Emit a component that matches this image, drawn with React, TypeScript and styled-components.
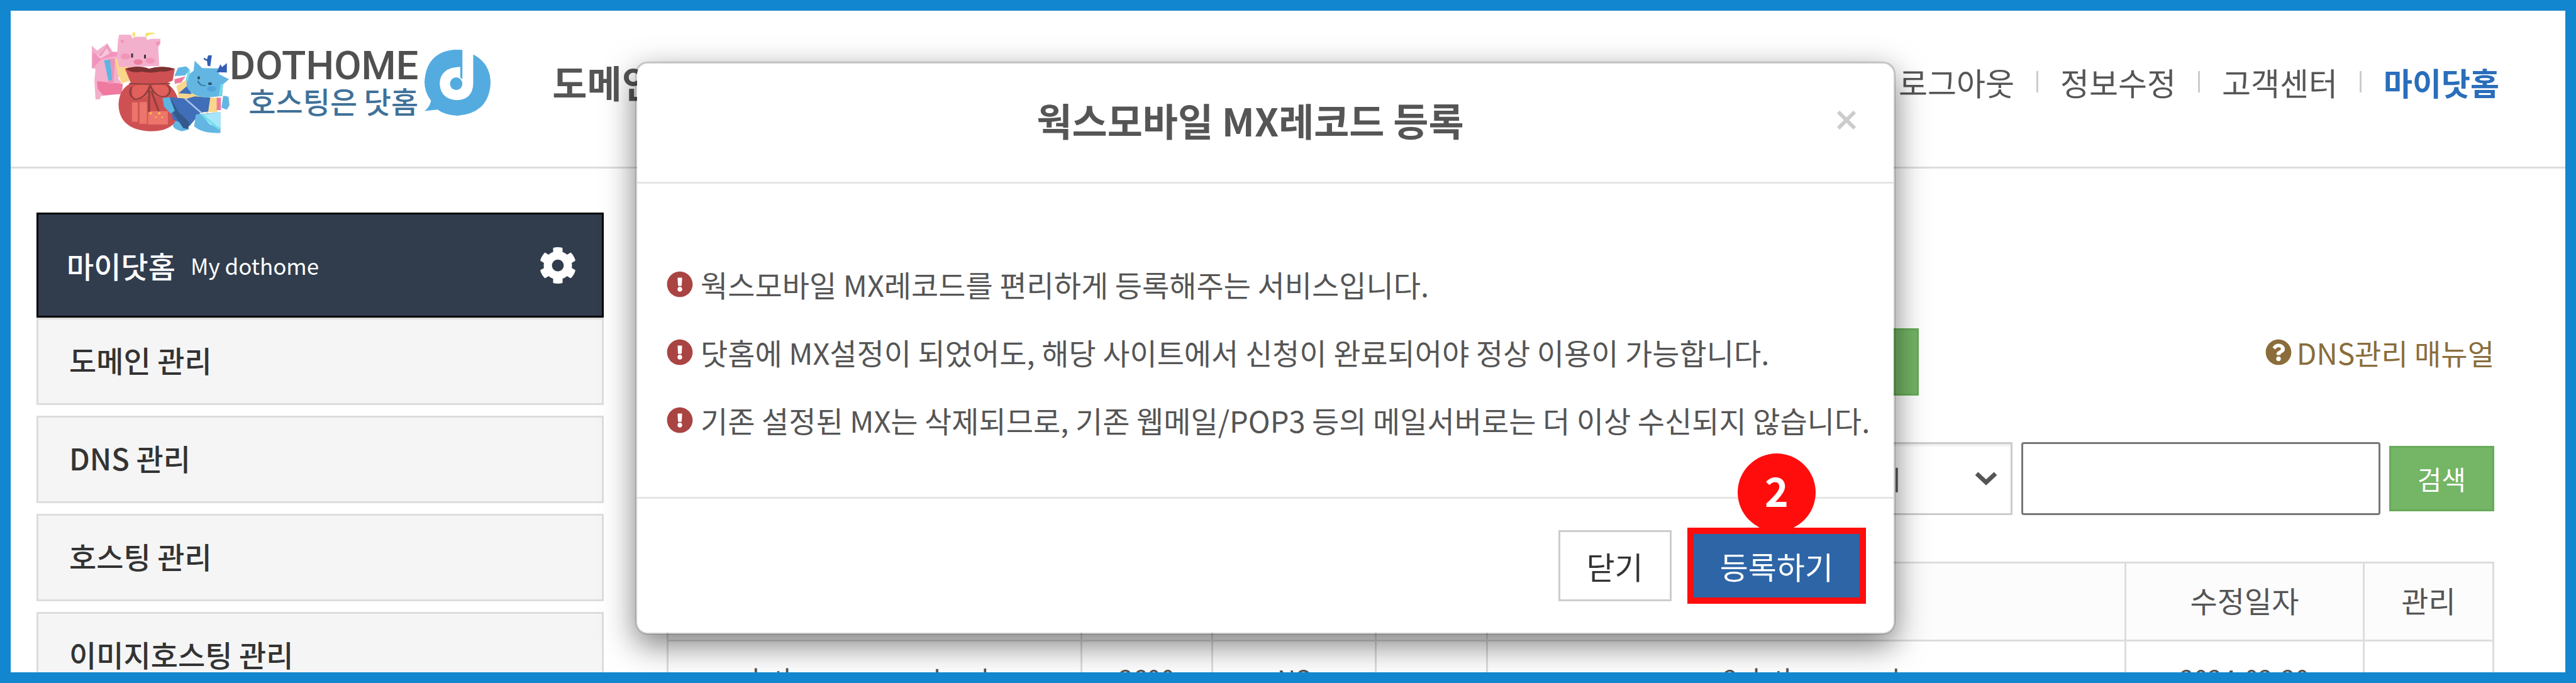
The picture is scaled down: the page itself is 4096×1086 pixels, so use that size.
import React from "react";
import styled, { createGlobalStyle } from "styled-components";
import { FaCog, FaExclamationCircle, FaQuestionCircle } from "react-icons/fa";

const GlobalStyle = createGlobalStyle`
  *, *::before, *::after { box-sizing: border-box; }
  body {
    margin: 0;
    background: #fff;
    color: #555;
    font-family: "Noto Sans CJK KR", "Noto Sans", sans-serif;
    font-size: 47px;
    line-height: 60px;
  }
  button, input, select { font: inherit; color: inherit; margin: 0; }
  a { color: inherit; text-decoration: none; }
  ul { list-style: none; margin: 0; padding: 0; }
`;

const Frame = styled.div`
  position: relative;
  height: 100vh;
  overflow: hidden;
  border: 17px solid #1287d0;
  background: #fff;
`;

const Header = styled.header`
  display: flex;
  align-items: center;
  padding: 34px 105px 53px 128px;
  border-bottom: 3px solid #ddd;
`;

const Brand = styled.a`
  display: flex;
  align-items: center;
`;

const BrandText = styled.span`
  display: flex;
  flex-direction: column;
  align-items: flex-end;
  margin-right: 10px;
`;

const BrandName = styled.span`
  font-family: Roboto, "Liberation Sans", sans-serif;
  font-size: 63px;
  font-weight: 500;
  line-height: 56px;
  color: #505050;
`;

const BrandSlogan = styled.span`
  font-size: 47px;
  font-weight: 500;
  line-height: 54px;
  color: #3f7199;
`;

const MainNav = styled.nav`
  margin-left: 98px;
  padding-bottom: 4px;
  font-size: 60px;
  font-weight: 700;
  line-height: 80px;
  color: #555;
`;

const UserNav = styled.nav`
  display: flex;
  align-items: center;
  gap: 35px;
  margin-left: auto;
  padding-bottom: 4px;
  font-size: 50px;
`;

const UserLink = styled.a<{ $active?: boolean }>`
  color: ${(p) => (p.$active ? "#2a6ebb" : "#555")};
  font-weight: ${(p) => (p.$active ? 700 : 400)};
`;

const Divider = styled.span`
  width: 3px;
  height: 34px;
  background: #ccc;
`;

const Main = styled.main`
  display: grid;
  grid-template-columns: 902px minmax(0, 1fr);
  column-gap: 100px;
  align-items: start;
  padding: 70px 113px 0 41px;
`;

const SideHead = styled.div`
  display: flex;
  align-items: center;
  height: 167px;
  padding: 0 40px 0 45px;
  border: 3px solid #000;
  background: #313d4d;
  color: #fff;
  font-weight: 500;
`;

const SideHeadSub = styled.small`
  margin-left: 24px;
  font-size: 35px;
  font-weight: 400;
`;

const GearButton = styled.button`
  display: flex;
  margin-left: auto;
  padding: 0;
  border: 0;
  background: none;
  color: #fff;
  font-size: 60px;
`;

const SideMenu = styled.ul`
  display: flex;
  flex-direction: column;
  gap: 17px;
`;

const SideItem = styled.a`
  display: flex;
  align-items: center;
  height: 139px;
  padding: 0 49px 6px;
  border: 3px solid #ddd;
  background: #f5f5f5;
  color: #333;
  font-weight: 500;
`;

const Content = styled.section`
  display: flex;
  flex-direction: column;
  gap: 74px;
  padding-top: 184px;
`;

const Toolbar = styled.div`
  display: flex;
  align-items: flex-start;
  justify-content: space-between;
`;

const ToolbarActions = styled.div`
  display: flex;
  justify-content: flex-end;
  width: 1991px;
`;

const GreenButton = styled.button<{ $height: number }>`
  height: ${(p) => p.$height}px;
  padding: 0 42px;
  border: 3px solid #67ab58;
  background: #74b566;
  color: #fff;
  font-size: 42px;
`;

const ManualLink = styled.a`
  display: flex;
  align-items: center;
  gap: 8px;
  font-size: 46px;
  line-height: 76px;
  color: #8a6d3b;

  svg { font-size: 42px; }
`;

const SearchForm = styled.form`
  display: flex;
  align-items: center;
  justify-content: flex-end;
  gap: 14px;
  height: 116px;
`;

const SelectBox = styled.label`
  position: relative;
  display: block;
  align-self: stretch;
  width: 320px;

  svg {
    position: absolute;
    right: 24px;
    top: 46px;
    pointer-events: none;
  }
`;

const Select = styled.select`
  appearance: none;
  width: 100%;
  height: 100%;
  padding: 0 62px;
  border: 3px solid #ccc;
  border-radius: 0;
  background: #fff;
  box-shadow: inset 0 3px 3px rgba(0, 0, 0, 0.075);
  font-size: 42px;
`;

const SearchInput = styled.input`
  align-self: stretch;
  width: 571px;
  padding: 0 20px;
  border: 3px solid #767676;
  border-radius: 4px;
  background: #fff;
`;

const Table = styled.table`
  width: 100%;
  table-layout: fixed;
  border-collapse: collapse;

  th, td {
    height: 124px;
    padding: 0 0 6px;
    border: 3px solid #ddd;
    text-align: center;
  }
  th {
    background: #fcfcfc;
    font-weight: 400;
  }
  td { font-size: 40px; }
`;

const Overlay = styled.div`
  position: absolute;
  inset: 0;
  display: flex;
  align-items: flex-start;
  justify-content: center;
  padding: 81px 72px 0 0;
`;

const Modal = styled.div`
  width: 2004px;
  border: 3px solid rgba(0, 0, 0, 0.2);
  border-radius: 20px;
  background: #fff;
  background-clip: padding-box;
  box-shadow: 0 17px 50px rgba(0, 0, 0, 0.5);
`;

const ModalHeader = styled.div`
  display: flex;
  align-items: center;
  height: 191px;
  padding: 0 60px 8px;
  border-bottom: 3px solid #e5e5e5;
`;

const ModalTitle = styled.h2`
  flex: 1;
  margin: 0;
  font-size: 61px;
  font-weight: 700;
  line-height: 80px;
  text-align: center;
`;

const CloseButton = styled.button`
  display: flex;
  align-items: center;
  justify-content: flex-end;
  width: 48px;
  padding: 0;
  border: 0;
  background: none;
  color: #ccc;
`;

const NoticeList = styled.ul`
  padding: 106px 47px 68px;
`;

const Notice = styled.li`
  display: flex;
  align-items: center;
  gap: 12px;
  height: 108px;
  white-space: nowrap;

  svg {
    flex: none;
    font-size: 42px;
    color: #a94442;
  }
`;

const ModalFooter = styled.div`
  display: flex;
  align-items: center;
  justify-content: flex-end;
  gap: 25px;
  padding: 46px 44px;
  border-top: 3px solid #e5e5e5;
  font-size: 49px;
`;

const CancelButton = styled.button`
  height: 113px;
  padding: 0 42px;
  border: 3px solid #ccc;
  background: #fff;
  color: #333;
`;

const SubmitWrap = styled.div`
  position: relative;
`;

const SubmitButton = styled.button`
  height: 121px;
  padding: 0 42px;
  border: 10px solid #ff0d0d;
  background: #2d65a6;
  color: #fff;
`;

const StepBadge = styled.span`
  position: absolute;
  left: 50%;
  bottom: 115px;
  display: flex;
  align-items: center;
  justify-content: center;
  width: 124px;
  height: 124px;
  margin-left: -62px;
  padding-bottom: 10px;
  border-radius: 50%;
  background: #ff0d0d;
  color: #fff;
  font-size: 64px;
  font-weight: 700;
`;

const Mascots = () => (
  <svg width="220" height="161" viewBox="38 70 516 602" preserveAspectRatio="none" aria-hidden="true">
    <path d="M192 72h10v24h-10zM240 78q8-8 34-4v8q-20-2-26 14h-8z" fill="#f8e472" />
    <path d="M40 150l20 30 38-44 20 50 22 2v160l10 20-10 70-66 12-4 20H54l-4-110 4-70-14-6z" fill="#f3b0cc" />
    <path d="M44 190l24 20 30-64 14 46 24-2 2 22-30 8-30 10-34 55H42z" fill="#f093bd" />
    <path d="M54 198l20 16 22-50 12 32-36 32z" fill="#f7c6da" />
    <path d="M60 362q50 10 96 16l-4 60-70 8-20-40z" fill="#f0799f" />
    <path d="M104 228l24 0-8 150h-18z" fill="#ea94b6" />
    <path d="M86 238l22-4 8 120-14 4z" fill="#5cb5e2" />
    <path d="M126 222l58 50-4 90-28 12-16-60z" fill="#fad68a" />
    <path d="M142 86h44l6 22 8-10h42l6 20 12-8h36v30l-8 20 4 112-150 6-8-70 4-90z" fill="#f3b0cc" />
    <path d="M146 120q10-14 16 6l-8 12zM278 132q12-14 18 0l-12 22z" fill="#f093bd" />
    <circle cx="166" cy="215" r="18" fill="#f296b8" />
    <circle cx="258" cy="240" r="18" fill="#f296b8" />
    <ellipse cx="213" cy="248" rx="17" ry="16" fill="#ee7fa0" />
    <path d="M187 197h7v24h-7zM235 205h7v22h-7z" fill="#42333a" />
    <path d="M362 282l30-8 14 20-18 34-40 4z" fill="#63b6e2" />
    <path d="M348 350l42-16-16 36-24 8z" fill="#f0799f" />
    <path d="M530 448l20 6 4 50-10 28-20-12z" fill="#63b6e2" />
    <path d="M342 596l50-6 10 60-26 10q-34-14-34-40z" fill="#63b6e2" />
    <path d="M164 288q40-22 90 0 50-22 96 0l-8 70-22 16q44 50 46 140 0 146-104 146-120-6-122-160 2-90 46-126z" fill="#cf5052" />
    <path d="M166 288q50-24 88 0 46-22 94 0-18 20-50 16-40 14-70 2-40 10-62-18z" fill="#7b3231" />
    <path d="M192 400q20-24 66-18 50-8 68 20v54q-30 10-66-20-40 44-68 30z" fill="#e2605c" />
    <path d="M190 488h22v116h-22zM218 486h28v130h-28zM250 540h74v80h-74z" fill="#ec756c" />
    <path d="M180 376l76 4 76-4M188 396q-14 50 14 74 40-6 56-84 20 80 60 66 26-34 4-66M254 396l0 150M262 420l28 120" fill="none" stroke="#94403c" strokeWidth="8" />
    <path d="M256 546h8v14h-8zM288 546h8v14h-8zM276 572h6v8h-6zM300 572h6v8h-6z" fill="#fbc242" />
    <path d="M356 390l36-36 26 50 60 50-4 100-108-80z" fill="#fad68a" />
    <path d="M364 434l38-52 10 56zM332 456l62 10 30-14 60 8v80l-38 10-42 80-62-40z" fill="#406eb9" />
    <path d="M336 470l28 76 40 60-4 40-18-4-34-80-20-60z" fill="#34598c" />
    <path d="M304 462l26-4 20 80-16 16-24-40z" fill="#5cb5e2" />
    <path d="M482 460h26v86h-34z" fill="#fad68a" />
    <path d="M506 460l16 0v74h-16z" fill="#f0799f" />
    <path d="M388 466l62 86" stroke="#a9c7ee" strokeWidth="7" />
    <path d="M428 560l92-14v124q-70 4-98-40z" fill="#63b6e2" />
    <path d="M450 560l70-12v92l-40-20z" fill="#a5e6fb" />
    <path d="M450 560l66 88" stroke="#6de0e8" strokeWidth="9" />
    <path d="M424 240l28 44 66 2-4 34 38 30-22 30-4 70-62 10q-60-14-70-70-4-60 26-90z" fill="#63b6e2" />
    <path d="M404 300l-10 60M526 378l-8 72" stroke="#73ddea" strokeWidth="9" />
    <circle cx="487" cy="408" r="17" fill="#4fa4dc" />
    <path d="M435 334h8v16h-8zM475 370h12v14h-12z" fill="#284a67" />
    <path d="M436 360q4 26 28 30" fill="none" stroke="#37759b" strokeWidth="6" />
    <path d="M458 222l12 10 4-24h14l-6 66-10-4-2-28-12-8zM506 308l14-46 6 16 18-24v56z" fill="#345db4" />
  </svg>
);

const DotMark = () => (
  <svg width="105" height="105" viewBox="1282 170 244 392" preserveAspectRatio="none" aria-hidden="true">
    <path
      d="M1422 171V345a26 40 0 0 0-8-9V272q-74 4-76 100q4 96 66 98q56-6 58-98V198q64 54 64 170q-6 180-122 194q-46-2-74-36l-48 8q20-26 24-62q-24-50-24-110q6-176 110-192z"
      fill="#54abe0"
    />
    <ellipse cx="1399" cy="372" rx="23" ry="38" fill="#54abe0" />
  </svg>
);

const sideItems = ["도메인 관리", "DNS 관리", "호스팅 관리", "이미지호스팅 관리"];

const userLinks = ["로그아웃", "정보수정", "고객센터", "마이닷홈"];

const notices = [
  "웍스모바일 MX레코드를 편리하게 등록해주는 서비스입니다.",
  "닷홈에 MX설정이 되었어도, 해당 사이트에서 신청이 완료되어야 정상 이용이 가능합니다.",
  "기존 설정된 MX는 삭제되므로, 기존 웹메일/POP3 등의 메일서버로는 더 이상 수신되지 않습니다.",
];

const columns = [
  { label: "", width: 658, value: "dothomemanual.co.kr" },
  { label: "", width: 208, value: "3600" },
  { label: "", width: 260, value: "NS" },
  { label: "", width: 177, value: "" },
  { label: "", width: 1015, value: "ns2.dothome.co.kr" },
  { label: "수정일자", width: 379, value: "2024-02-20" },
  { label: "관리", width: 206, value: "" },
];

export default function App() {
  return (
    <>
      <GlobalStyle />
      <Frame>
        <Header>
          <Brand href="#">
            <Mascots />
            <BrandText>
              <BrandName>DOTHOME</BrandName>
              <BrandSlogan>호스팅은 닷홈</BrandSlogan>
            </BrandText>
            <DotMark />
          </Brand>
          <MainNav>
            <a href="#">도메인</a>
          </MainNav>
          <UserNav>
            {userLinks.map((label, i) => (
              <React.Fragment key={label}>
                {i > 0 && <Divider />}
                <UserLink href="#" $active={i === userLinks.length - 1}>
                  {label}
                </UserLink>
              </React.Fragment>
            ))}
          </UserNav>
        </Header>

        <Main>
          <aside>
            <SideHead>
              마이닷홈
              <SideHeadSub>My dothome</SideHeadSub>
              <GearButton type="button" aria-label="설정">
                <FaCog />
              </GearButton>
            </SideHead>
            <SideMenu>
              {sideItems.map((label) => (
                <li key={label}>
                  <SideItem href="#">{label}</SideItem>
                </li>
              ))}
            </SideMenu>
          </aside>

          <Content>
            <Toolbar>
              <ToolbarActions>
                <GreenButton type="button" $height={107} aria-label="MX레코드 등록" />
              </ToolbarActions>
              <ManualLink href="#">
                <FaQuestionCircle />
                DNS관리 매뉴얼
              </ManualLink>
            </Toolbar>

            <SearchForm>
              <SelectBox>
                <Select aria-label="검색 구분" defaultValue="all">
                  <option value="all">전체</option>
                </Select>
                <svg width="36" height="24" viewBox="0 0 36 24" aria-hidden="true">
                  <path d="M3 4l15 14L33 4" fill="none" stroke="#555" strokeWidth="7" />
                </svg>
              </SelectBox>
              <SearchInput type="text" aria-label="검색어" />
              <GreenButton type="submit" $height={104}>검색</GreenButton>
            </SearchForm>

            <Table>
              <colgroup>
                {columns.map((c, i) => (
                  <col key={i} style={{ width: c.width }} />
                ))}
              </colgroup>
              <thead>
                <tr>
                  {columns.map((c, i) => (
                    <th key={i} scope="col">{c.label}</th>
                  ))}
                </tr>
              </thead>
              <tbody>
                <tr>
                  {columns.map((c, i) => (
                    <td key={i}>{c.value}</td>
                  ))}
                </tr>
              </tbody>
            </Table>
          </Content>
        </Main>

        <Overlay>
          <Modal role="dialog" aria-labelledby="modal-title">
            <ModalHeader>
              <ModalTitle id="modal-title">웍스모바일 MX레코드 등록</ModalTitle>
              <CloseButton type="button" aria-label="창 닫기">
                <svg width="30" height="30" viewBox="0 0 30 30" aria-hidden="true">
                  <path d="M2 2l26 26M28 2L2 28" stroke="currentColor" strokeWidth="6" />
                </svg>
              </CloseButton>
            </ModalHeader>
            <NoticeList>
              {notices.map((text) => (
                <Notice key={text}>
                  <FaExclamationCircle />
                  {text}
                </Notice>
              ))}
            </NoticeList>
            <ModalFooter>
              <CancelButton type="button">닫기</CancelButton>
              <SubmitWrap>
                <StepBadge>2</StepBadge>
                <SubmitButton type="submit">등록하기</SubmitButton>
              </SubmitWrap>
            </ModalFooter>
          </Modal>
        </Overlay>
      </Frame>
    </>
  );
}
